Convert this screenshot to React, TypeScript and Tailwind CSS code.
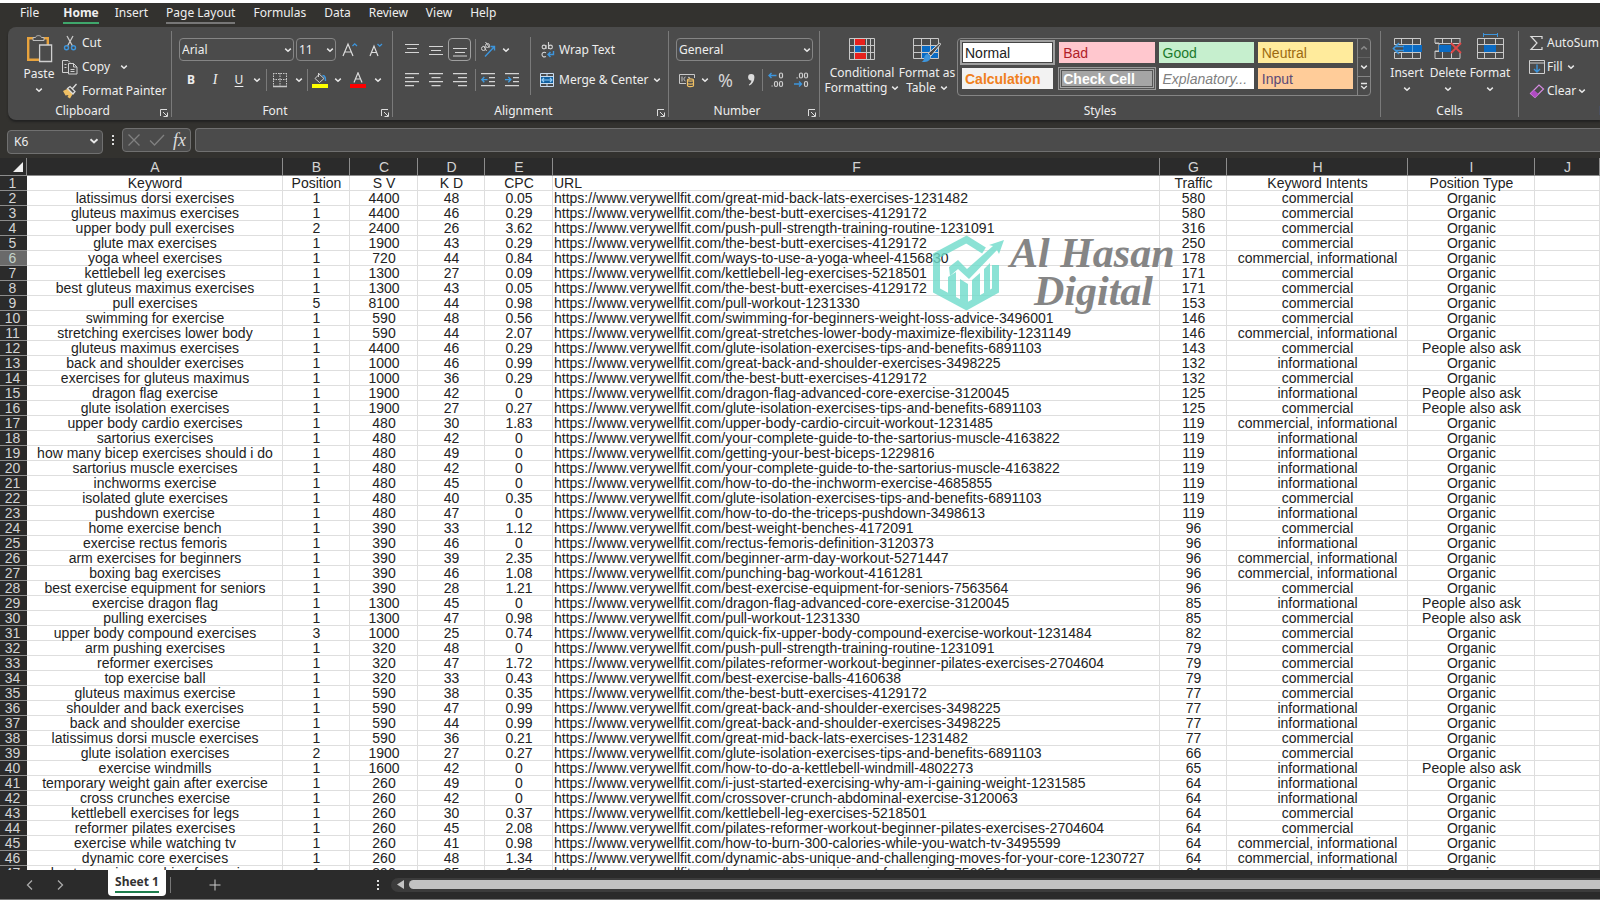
import React from "react";

type Row = [string, string, string, string, string, string, string, string, string];

const SITE = "https://www.verywellfit.com/";
const C = "commercial";
const N = "informational";
const B = "commercial, informational";
const O = "Organic";
const P = "People also ask";

const rows: Row[] = [
  ["latissimus dorsi exercises", "1", "4400", "48", "0.05", "great-mid-back-lats-exercises-1231482", "580", C, O],
  ["gluteus maximus exercises", "1", "4400", "46", "0.29", "the-best-butt-exercises-4129172", "580", C, O],
  ["upper body pull exercises", "2", "2400", "26", "3.62", "push-pull-strength-training-routine-1231091", "316", C, O],
  ["glute max exercises", "1", "1900", "43", "0.29", "the-best-butt-exercises-4129172", "250", C, O],
  ["yoga wheel exercises", "1", "720", "44", "0.84", "ways-to-use-a-yoga-wheel-4156830", "178", B, O],
  ["kettlebell leg exercises", "1", "1300", "27", "0.09", "kettlebell-leg-exercises-5218501", "171", C, O],
  ["best gluteus maximus exercises", "1", "1300", "43", "0.05", "the-best-butt-exercises-4129172", "171", C, O],
  ["pull exercises", "5", "8100", "44", "0.98", "pull-workout-1231330", "153", C, O],
  ["swimming for exercise", "1", "590", "48", "0.56", "swimming-for-beginners-weight-loss-advice-3496001", "146", C, O],
  ["stretching exercises lower body", "1", "590", "44", "2.07", "great-stretches-lower-body-maximize-flexibility-1231149", "146", B, O],
  ["gluteus maximus exercises", "1", "4400", "46", "0.29", "glute-isolation-exercises-tips-and-benefits-6891103", "143", C, P],
  ["back and shoulder exercises", "1", "1000", "46", "0.99", "great-back-and-shoulder-exercises-3498225", "132", N, O],
  ["exercises for gluteus maximus", "1", "1000", "36", "0.29", "the-best-butt-exercises-4129172", "132", C, O],
  ["dragon flag exercise", "1", "1900", "42", "0", "dragon-flag-advanced-core-exercise-3120045", "125", N, P],
  ["glute isolation exercises", "1", "1900", "27", "0.27", "glute-isolation-exercises-tips-and-benefits-6891103", "125", C, P],
  ["upper body cardio exercises", "1", "480", "30", "1.83", "upper-body-cardio-circuit-workout-1231485", "119", B, O],
  ["sartorius exercises", "1", "480", "42", "0", "your-complete-guide-to-the-sartorius-muscle-4163822", "119", N, O],
  ["how many bicep exercises should i do", "1", "480", "49", "0", "getting-your-best-biceps-1229816", "119", N, O],
  ["sartorius muscle exercises", "1", "480", "42", "0", "your-complete-guide-to-the-sartorius-muscle-4163822", "119", N, O],
  ["inchworms exercise", "1", "480", "45", "0", "how-to-do-the-inchworm-exercise-4685855", "119", N, O],
  ["isolated glute exercises", "1", "480", "40", "0.35", "glute-isolation-exercises-tips-and-benefits-6891103", "119", C, O],
  ["pushdown exercise", "1", "480", "47", "0", "how-to-do-the-triceps-pushdown-3498613", "119", N, O],
  ["home exercise bench", "1", "390", "33", "1.12", "best-weight-benches-4172091", "96", C, O],
  ["exercise rectus femoris", "1", "390", "46", "0", "rectus-femoris-definition-3120373", "96", N, O],
  ["arm exercises for beginners", "1", "390", "39", "2.35", "beginner-arm-day-workout-5271447", "96", B, O],
  ["boxing bag exercises", "1", "390", "46", "1.08", "punching-bag-workout-4161281", "96", B, O],
  ["best exercise equipment for seniors", "1", "390", "28", "1.21", "best-exercise-equipment-for-seniors-7563564", "96", C, O],
  ["exercise dragon flag", "1", "1300", "45", "0", "dragon-flag-advanced-core-exercise-3120045", "85", N, P],
  ["pulling exercises", "1", "1300", "47", "0.98", "pull-workout-1231330", "85", C, P],
  ["upper body compound exercises", "3", "1000", "25", "0.74", "quick-fix-upper-body-compound-exercise-workout-1231484", "82", C, O],
  ["arm pushing exercises", "1", "320", "48", "0", "push-pull-strength-training-routine-1231091", "79", C, O],
  ["reformer exercises", "1", "320", "47", "1.72", "pilates-reformer-workout-beginner-pilates-exercises-2704604", "79", C, O],
  ["top exercise ball", "1", "320", "33", "0.43", "best-exercise-balls-4160638", "79", C, O],
  ["gluteus maximus exercise", "1", "590", "38", "0.35", "the-best-butt-exercises-4129172", "77", C, O],
  ["shoulder and back exercises", "1", "590", "47", "0.99", "great-back-and-shoulder-exercises-3498225", "77", N, O],
  ["back and shoulder exercise", "1", "590", "44", "0.99", "great-back-and-shoulder-exercises-3498225", "77", N, O],
  ["latissimus dorsi muscle exercises", "1", "590", "36", "0.21", "great-mid-back-lats-exercises-1231482", "77", C, O],
  ["glute isolation exercises", "2", "1900", "27", "0.27", "glute-isolation-exercises-tips-and-benefits-6891103", "66", C, O],
  ["exercise windmills", "1", "1600", "42", "0", "how-to-do-a-kettlebell-windmill-4802273", "65", N, P],
  ["temporary weight gain after exercise", "1", "260", "49", "0", "i-just-started-exercising-why-am-i-gaining-weight-1231585", "64", N, O],
  ["cross crunches exercise", "1", "260", "42", "0", "crossover-crunch-abdominal-exercise-3120063", "64", N, O],
  ["kettlebell exercises for legs", "1", "260", "30", "0.37", "kettlebell-leg-exercises-5218501", "64", C, O],
  ["reformer pilates exercises", "1", "260", "45", "2.08", "pilates-reformer-workout-beginner-pilates-exercises-2704604", "64", C, O],
  ["exercise while watching tv", "1", "260", "41", "0.98", "how-to-burn-300-calories-while-you-watch-tv-3495599", "64", B, O],
  ["dynamic core exercises", "1", "260", "48", "1.34", "dynamic-abs-unique-and-challenging-moves-for-your-core-1230727", "64", B, O],
  ["best exercise machine for seniors", "1", "390", "35", "1.52", "best-exercise-equipment-for-seniors-7563564", "64", C, O],
];

const titles = ["Keyword", "Position", "S V", "K D", "CPC", "URL", "Traffic", "Keyword Intents", "Position Type"];

function Chevron({ className = "w-2 h-2" }: { className?: string }) {
  return (
    <svg viewBox="0 0 8 8" className={"shrink-0 " + className} fill="none" stroke="#e6e6e6" strokeWidth="1.5">
      <path d="M1.2 2.6 4 5.2 6.8 2.6" />
    </svg>
  );
}

function Launcher() {
  return (
    <button aria-label="More options" className="absolute right-[3px] bottom-0 h-2 w-2">
      <svg viewBox="0 0 8 8" className="h-2 w-2" fill="none" stroke="#dcdcdc">
        <path d="M.5 7V.5H7M3 3l4 4M7.5 3.500V7.500H3.500" />
      </svg>
    </button>
  );
}

function Group({ label, width, launcher, last, children }: { label: string; width: string; launcher?: boolean; last?: boolean; children: React.ReactNode }) {
  return (
    <section aria-label={label} className={"relative flex shrink-0 flex-col " + width + (last ? "" : " border-r border-[#7a7a7a]")}>
      <div className="flex h-[74px] shrink-0">{children}</div>
      <div className={"text-center leading-3" + (launcher ? " pr-3.5" : "")}>{label}</div>
      {launcher && <Launcher />}
    </section>
  );
}

function Picker({ label, value, options, width }: { label: string; value: string; options: string[]; width: string }) {
  return (
    <div className={"relative h-[23px] shrink-0 " + width}>
      <select aria-label={label} defaultValue={value} className="h-full w-full appearance-none rounded border border-[#858585] bg-[#4b4b4b] px-0.5 text-xs text-[#eee]">
        {options.map((o) => (
          <option key={o}>{o}</option>
        ))}
      </select>
      <Chevron className="pointer-events-none absolute top-2 right-0.5 h-2 w-2" />
    </div>
  );
}

function Tool({ label, width = "w-6", children }: { label: string; width?: string; children: React.ReactNode }) {
  return (
    <button aria-label={label} className={"flex h-[23px] shrink-0 items-center justify-center " + width}>
      {children}
    </button>
  );
}

const Divider = () => <span className="h-[22px] w-px shrink-0 bg-[#7a7a7a]" />;

function Lines({ d }: { d: string }) {
  return (
    <svg viewBox="0 0 14 14" className="h-[14px] w-[14px]" fill="none" stroke="#d4d4d4" strokeWidth="1.2">
      <path d={d} />
    </svg>
  );
}

function Indent({ out }: { out?: boolean }) {
  return (
    <svg viewBox="0 0 14 14" className="h-[14px] w-[14px]" fill="none" strokeWidth="1.2">
      <path stroke="#d4d4d4" d="M0 .6h14M8 4.600h6M8 8.600h6M0 12.600h14" />
      <path stroke="#3f9ade" strokeWidth="1.4" d={out ? "M6.500 6.600H1M3.300 4 .8 6.600l2.500 2.600" : "M0 6.600h5.500M3.300 4l2.500 2.600-2.500 2.600"} />
    </svg>
  );
}

function GridIcon({ kind }: { kind: "insert" | "delete" | "format" }) {
  return (
    <svg viewBox="0 0 30 28" className="h-7 w-[30px]" fill="none">
      {kind === "delete" ? (
        <path stroke="#c8c8c8" d="M2 5.500h25M2 5v5h4v8H2v7.500h25V20M27 5v5M9.500 5v5M18.500 5v5M9.500 18v7M18.500 18v7M2 10.500h25M2 18.500h18" />
      ) : (
        <path stroke="#c8c8c8" d="M2.500 5.500h26v20h-26zM2 11.500h26M2 19.500h26M9.500 5v20M20.500 5v20" />
      )}
      {kind === "insert" && (
        <>
          <path fill="#4b4b4b" d="M1 12h10v7H1z" />
          <path fill="#0a6bc4" d="M11 12h19v7H11z" />
          <path stroke="#3d95dc" strokeWidth="1.6" d="M12 13.500H3M12 17.500H3M7 10l-5.500 5.500L7 21" />
          <path stroke="#5aa7e2" d="M20.500 12v7" />
        </>
      )}
      {kind === "delete" && (
        <>
          <path fill="#0a6bc4" d="M6 12h12v7H6z" />
          <path stroke="#e04848" strokeWidth="1.8" d="m18 10 10 10M28 10 18 20" />
        </>
      )}
      {kind === "format" && (
        <>
          <path fill="#0a6bc4" d="M9 12h12v7H9z" />
          <path stroke="#3d95dc" d="M8 1.500h14M8.500 0v4M22.500 0v4" />
        </>
      )}
    </svg>
  );
}

function CellButton({ kind, label, width }: { kind: "insert" | "delete" | "format"; label: string; width: string }) {
  return (
    <button className={"flex flex-col items-center self-start pt-0.5 " + width}>
      <GridIcon kind={kind} />
      <span className="mt-1 leading-4">{label}</span>
      <Chevron className="mt-1 h-2 w-2" />
    </button>
  );
}

function Ribbon() {
  return (
    <div className="ml-2 flex h-[93px] overflow-hidden rounded-l-lg bg-[#4b4b4b] pt-1 pb-[3px] text-xs text-[#eee] shadow-[0_2px_2px_#222]">
      <Group label="Clipboard" width="w-[164px]" launcher>
        <button className="ml-3 flex w-[38px] flex-col items-center self-start pt-[3px]">
          <svg viewBox="0 0 28 30" className="h-[30px] w-7" fill="none">
            <path stroke="#e8a33d" strokeWidth="2.400" d="M8 4.200H3.200v21.600H15M18 4.200h4.800V11" />
            <path fill="#4b4b4b" stroke="#bdbdbd" d="M8 6.500V3.500h2.500C11 1 16 1 16.500 3.500H19v3z" />
            <path fill="#4b4b4b" stroke="#cfcfcf" strokeWidth="1.300" d="M14.600 11h12v16.500h-12z" />
          </svg>
          <span className="mt-0.5 leading-4">Paste</span>
          <Chevron className="mt-1 h-2 w-2" />
        </button>
        <div className="ml-1 flex flex-col">
          <button className="flex h-6 items-center gap-1">
            <svg viewBox="0 0 16 16" className="h-4 w-4" fill="none">
              <path stroke="#c8c8c8" strokeWidth="1.300" d="M5 1l5.500 10M11 1 5.500 11" />
              <circle cx="4.500" cy="12.800" r="2" stroke="#3d95dc" strokeWidth="1.400" />
              <circle cx="11.500" cy="12.800" r="2" stroke="#3d95dc" strokeWidth="1.400" />
            </svg>
            Cut
          </button>
          <button className="flex h-6 items-center gap-1">
            <svg viewBox="0 0 16 16" className="h-4 w-4" fill="none" stroke="#d0d0d0">
              <path d="M6 13.500H.5V1.500H6l2 2M6.500 4.500h5l3.500 3.500v7H6.500zM11.500 4.500V8H15M8.500 10.500h4M8.500 12.500h4M2.500 5.500h2M2.500 8.500h2" />
            </svg>
            Copy
            <Chevron className="ml-1.5 h-2 w-2" />
          </button>
          <button className="flex h-6 items-center gap-1 whitespace-nowrap">
            <svg viewBox="0 0 16 16" className="h-4 w-4" fill="none">
              <path fill="#f0c064" d="M1 8l5-2.500 5 5L8 15.500 5.500 14l1-2-3 .5z" />
              <path stroke="#dcdcdc" strokeWidth="1.300" d="M5.500 5.500 8 3.500l5 5-2 2.500zM10.500 5.500 14.500 1" />
            </svg>
            Format Painter
          </button>
        </div>
      </Group>

      <Group label="Font" width="w-[221px]" launcher>
        <div className="flex flex-col gap-[7px] pt-[7px] pl-[7px]">
          <div className="flex items-center gap-0.5">
            <Picker label="Font name" value="Arial" options={["Arial", "Calibri"]} width="w-[115px]" />
            <Picker label="Font size" value="11" options={["10", "11", "12"]} width="w-10" />
            <Tool label="Increase font size">
              <svg viewBox="0 0 16 16" className="h-4 w-4" fill="none">
                <path stroke="#dcdcdc" strokeWidth="1.200" d="M1 14 6 2l5 12M2.700 10h6.600" />
                <path stroke="#3d95dc" strokeWidth="1.300" d="m10.500 4 2.200-2.200L15 4" />
              </svg>
            </Tool>
            <Tool label="Decrease font size">
              <svg viewBox="0 0 16 16" className="h-4 w-4" fill="none">
                <path stroke="#dcdcdc" strokeWidth="1.200" d="M2 14 6 4l4 10M3.400 10.500h5.200" />
                <path stroke="#3d95dc" strokeWidth="1.300" d="m9.500 2 2.200 2.200L14 2" />
              </svg>
            </Tool>
          </div>
          <div className="flex items-center">
            <Tool label="Bold"><b>B</b></Tool>
            <Tool label="Italic"><i className="font-['Liberation_Serif',serif] text-sm">I</i></Tool>
            <Tool label="Underline"><span className="underline underline-offset-2">U</span></Tool>
            <Tool label="Underline styles" width="w-3"><Chevron /></Tool>
            <span className="w-[3px]" />
            <Divider />
            <Tool label="Borders" width="w-[26px]">
              <svg viewBox="0 0 16 16" className="h-4 w-4" fill="none" stroke="#c8c8c8">
                <path strokeDasharray="1.500 1" d="M1 1.500h14M1.500 1v13M14.500 1v13M8 1v13M1 7.500h14" />
                <path strokeWidth="1.400" d="M1 14.500h14" />
              </svg>
            </Tool>
            <Tool label="Border styles" width="w-3"><Chevron /></Tool>
            <span className="w-0.5" />
            <Divider />
            <Tool label="Fill color">
              <svg viewBox="0 0 16 16" className="h-4 w-4" fill="none">
                <path stroke="#d0d0d0" d="M6.500 1.500 12 6.500 7.500 10.500 3 6.500l5-5M6.500 1v4" />
                <path stroke="#3d95dc" strokeWidth="1.400" d="M10.500 3.500C13.500 3.500 13.500 6 13.500 9" />
                <path fill="#ffff00" d="M0 12h16v4H0z" />
              </svg>
            </Tool>
            <Tool label="Fill colors" width="w-3"><Chevron /></Tool>
            <Tool label="Font color" width="w-7">
              <svg viewBox="0 0 16 16" className="h-4 w-4" fill="none">
                <path stroke="#dcdcdc" strokeWidth="1.200" d="M4 10.500 8 .8l4 9.700M5.400 7h5.200" />
                <path fill="#f00" d="M0 12h16v4H0z" />
              </svg>
            </Tool>
            <Tool label="Font colors" width="w-3"><Chevron /></Tool>
          </div>
        </div>
      </Group>

      <Group label="Alignment" width="w-[276px]" launcher>
        <div className="flex shrink-0 flex-col gap-[7px] pt-[7px] pl-[7px]">
          <div className="flex items-center">
            <Tool label="Top align"><Lines d="M0 1.500h14M2 5.500h10M0 9.500h14" /></Tool>
            <Tool label="Middle align"><Lines d="M0 3.500h14M2 7.500h10M0 11.500h14" /></Tool>
            <button aria-label="Bottom align" className="flex h-[23px] w-[23px] items-center justify-center rounded border border-[#a0a0a0]">
              <Lines d="M0 5.500h14M2 9.500h10M0 13h14" />
            </button>
            <span className="w-1" />
            <Divider />
            <Tool label="Orientation">
              <svg viewBox="0 0 16 16" className="h-4 w-4" fill="none">
                <g stroke="#d0d0d0">
                  <circle cx="3.500" cy="6.500" r="2" />
                  <circle cx="7.500" cy="3.500" r="2" />
                  <path d="M3.500 3.800 6.500 9M5.500 0l4 5.500" />
                </g>
                <path stroke="#3d95dc" strokeWidth="1.400" d="M5 14.500 14.500 4.500M10.500 4.500h4v4" />
              </svg>
            </Tool>
            <Tool label="Orientation options" width="w-3"><Chevron /></Tool>
          </div>
          <div className="flex items-center">
            <Tool label="Align left"><Lines d="M0 .6h14M0 4.600h9M0 8.600h14M0 12.600h9" /></Tool>
            <Tool label="Center"><Lines d="M0 .6h14M2.500 4.600h9M0 8.600h14M2.500 12.600h9" /></Tool>
            <Tool label="Align right"><Lines d="M0 .6h14M5 4.600h9M0 8.600h14M5 12.600h9" /></Tool>
            <span className="w-[3px]" />
            <Divider />
            <Tool label="Decrease indent"><Indent out /></Tool>
            <Tool label="Increase indent"><Indent /></Tool>
          </div>
        </div>
        <span className="mt-1.5 ml-1.5 h-[58px] w-px shrink-0 bg-[#7a7a7a]" />
        <div className="flex flex-col gap-[7px] pt-[7px] pl-2">
          <button className="flex h-[23px] items-center gap-1 whitespace-nowrap">
            <svg viewBox="0 0 16 16" className="h-4 w-4" fill="none" strokeWidth="1.100">
              <g stroke="#d4d4d4">
                <circle cx="5" cy="5" r="1.900" />
                <path d="M7 3v4M9.500 0v7M7 14.500c-2 1-4 0-4-1.900s2-2.900 4-1.900" />
                <circle cx="11.500" cy="5" r="1.900" />
              </g>
              <path stroke="#3d95dc" strokeWidth="1.400" d="M14.500 9v3.500H9M11.500 10 9 12.500l2.500 2.500" />
            </svg>
            Wrap Text
          </button>
          <button className="flex h-[23px] items-center gap-1 whitespace-nowrap">
            <svg viewBox="0 0 16 16" className="h-4 w-4" fill="none">
              <path fill="#0f5f9f" d="M1 4h14v8H1z" />
              <path stroke="#c8dcf0" d="M1.500 1.500h13v13h-13zM1 4.500h14M1 11.500h14M8 1v3M8 12v3" />
              <path stroke="#8cc8f4" strokeWidth="1.200" d="M3 8h10M5 6 3 8l2 2M11 6l2 2-2 2" />
            </svg>
            Merge &amp; Center
            <Chevron className="h-2 w-2" />
          </button>
        </div>
      </Group>

      <Group label="Number" width="w-[151px]" launcher>
        <div className="flex flex-col gap-[7px] pt-[7px] pl-[7px]">
          <Picker label="Number format" value="General" options={["General", "Number"]} width="w-[137px]" />
          <div className="flex items-center">
            <Tool label="Accounting format" width="w-[22px]">
              <svg viewBox="0 0 16 16" className="h-4 w-4" fill="none">
                <path stroke="#c8c8c8" d="M7 11.500H.5v-9h15V6M3 4.500v5M6.500 5C4.500 5 4.500 9 6.500 9M9 5.500c2-1 2 1 1 1.500" />
                <path fill="#4b4b4b" stroke="#f0c064" strokeWidth="1.200" d="M8.500 8c0-1.500 6-1.500 6 0v5.500c0 1.500-6 1.500-6 0zM8.500 8c0 1.500 6 1.500 6 0M8.500 11c0 1.500 6 1.500 6 0" />
              </svg>
            </Tool>
            <Tool label="Accounting options" width="w-[14px]"><Chevron /></Tool>
            <Tool label="Percent" width="w-[27px]"><span className="text-lg leading-5 text-[#d4d4d4]">%</span></Tool>
            <Tool label="Comma style" width="w-[23px]">
              <svg viewBox="0 0 16 16" className="h-4 w-4">
                <path fill="#dcdcdc" d="M8.200 2a3.200 3.200 0 0 1 3.200 3.400c0 3.600-2 6.600-5 8.200l-.6-.9c1.600-1.200 2.500-2.700 2.600-4.300A3.200 3.200 0 1 1 8.200 2z" />
              </svg>
            </Tool>
            <Divider />
            <Tool label="Increase decimal" width="w-[25px]">
              <svg viewBox="0 0 16 16" className="h-4 w-4" fill="none" strokeWidth="1.200">
                <g stroke="#d0d0d0">
                  <rect x="11.500" y="1" width="3" height="5" rx="1.500" />
                  <rect x="6.500" y="9.500" width="3" height="5" rx="1.500" />
                  <rect x="11.500" y="9.500" width="3" height="5" rx="1.500" />
                  <path d="M3.500 14h1.200" />
                </g>
                <path stroke="#3d95dc" strokeWidth="1.400" d="M8.500 3.500H1M3.500 1 1 3.500 3.500 6" />
              </svg>
            </Tool>
            <Tool label="Decrease decimal" width="w-[25px]">
              <svg viewBox="0 0 16 16" className="h-4 w-4" fill="none" strokeWidth="1.200">
                <g stroke="#d0d0d0">
                  <rect x="6.500" y="1" width="3" height="5" rx="1.500" />
                  <rect x="11.500" y="1" width="3" height="5" rx="1.500" />
                  <rect x="11.500" y="9.500" width="3" height="5" rx="1.500" />
                  <path d="M3.500 5.800h1.200" />
                </g>
                <path stroke="#3d95dc" strokeWidth="1.400" d="M1 12h7.500M6 9.500 8.500 12 6 14.500" />
              </svg>
            </Tool>
          </div>
        </div>
      </Group>

      <Group label="Styles" width="w-[561px]">
        <button className="ml-1.5 flex w-[72px] flex-col items-center self-start pt-1 leading-[15px]">
          <svg viewBox="0 0 28 24" className="mt-0.5 mb-1 h-6 w-7" fill="none">
            <path fill="#e8201c" d="M6 1h11v7H6zM6 16h13v7H6z" />
            <path fill="#0a6bc4" d="M6 9h7v6H6z" />
            <path stroke="#c8c8c8" d="M1.500 1.500h25v21h-25zM1 8.500h26M1 15.500h26M6.500 1v21M18.500 1v21M22.500 1v21" />
          </svg>
          <span>Conditional</span>
          <span className="flex items-center gap-1">Formatting <Chevron /></span>
        </button>
        <button className="flex w-[58px] flex-col items-center self-start pt-1 leading-[15px]">
          <svg viewBox="0 0 30 26" className="mt-0.5 mb-0.5 h-[26px] w-[30px]" fill="none">
            <path fill="#0a6bc4" d="M10 8h17v14H10z" />
            <path stroke="#c8c8c8" d="M1.500 1.500h25v20h-25zM1 8.500h26M1 15.500h26M9.500 1v20M18.500 1v20" />
            <path fill="#4b4b4b" stroke="#dcdcdc" d="M28.500 7.500 19 19l-3-2.500L27 6.500c1-.6 2 .2 1.500 1z" />
            <path fill="#3d95dc" d="M15.500 17l3 3c0 4-4 5.500-9 5 3-1.500 2-3 3-5.500.6-1.500 1.600-2.300 3-2.500z" />
          </svg>
          <span className="whitespace-nowrap">Format as</span>
          <span className="flex items-center gap-1">Table <Chevron /></span>
        </button>
        <div className="mt-[7px] ml-px flex h-[58px] w-[414px] rounded border border-[#858585] font-['Liberation_Sans',Arial,sans-serif] text-sm">
          <div className="grid flex-1 grid-cols-4 content-start gap-x-1 gap-y-[3px] px-0.5 pt-px pr-1 text-left">
            <button className="h-[25px] border-2 border-[#a0a0a0] bg-white px-[3px] text-left leading-[18px] text-[#222] inset-ring inset-ring-[#444]">Normal</button>
            <button className="my-0.5 h-[21px] bg-[#ffc7ce] px-1 text-left text-[#b01e28]">Bad</button>
            <button className="my-0.5 h-[21px] bg-[#c6efce] px-1 text-left text-[#1c7a2c]">Good</button>
            <button className="my-0.5 h-[21px] bg-[#ffeb9c] px-1 text-left text-[#9c6a10]">Neutral</button>
            <button className="mx-0.5 h-[21px] bg-[#f2f2f2] px-[3px] text-left font-bold text-[#f08020]">Calculation</button>
            <button className="h-[21px] border-[3px] border-double border-[#555] bg-[#a5a5a5] px-px text-left leading-[14px] font-bold text-white outline outline-1 outline-[#999]">Check Cell</button>
            <button className="h-[21px] bg-white px-1 text-left text-[#7f7f7f] italic">Explanatory...</button>
            <button className="h-[21px] bg-[#ffcc99] px-1 text-left text-[#5c4a76]">Input</button>
          </div>
          <div className="flex w-[13px] flex-col divide-y divide-[#858585] border-l border-[#858585]">
            <button aria-label="Previous styles" className="flex flex-1 items-center justify-center opacity-40"><Chevron className="h-2 w-2 rotate-180" /></button>
            <button aria-label="Next styles" className="flex flex-1 items-center justify-center"><Chevron /></button>
            <button aria-label="All styles" className="flex flex-1 items-center justify-center">
              <svg viewBox="0 0 8 8" className="h-2 w-2" fill="none" stroke="#e6e6e6" strokeWidth="1.300"><path d="M1 1.500h6M1.200 4 4 6.700 6.800 4" /></svg>
            </button>
          </div>
        </div>
      </Group>

      <Group label="Cells" width="w-[138px]">
        <CellButton kind="insert" label="Insert" width="ml-[7px] w-[38px]" />
        <CellButton kind="delete" label="Delete" width="ml-px w-[42px]" />
        <CellButton kind="format" label="Format" width="w-[42px]" />
      </Group>

      <Group label="Editing" width="w-[200px]" last>
        <div className="flex flex-col pl-2.5">
          <button className="flex h-6 items-center gap-0.5">
            <svg viewBox="0 0 16 16" className="h-4 w-4" fill="none" stroke="#dcdcdc" strokeWidth="1.200"><path d="M13 4V1.500H2L8 8l-6 6.500h11V12" /></svg>
            AutoSum
          </button>
          <button className="flex h-6 items-center gap-0.5">
            <svg viewBox="0 0 16 16" className="h-4 w-4" fill="none">
              <path stroke="#d0d0d0" d="M.5 1.500h15v13H.5zM0 4h16" />
              <path stroke="#3d95dc" strokeWidth="1.400" d="M8 5.500V13M5 10l3 3 3-3" />
            </svg>
            Fill <Chevron className="ml-0.5 h-2 w-2" />
          </button>
          <button className="flex h-6 items-center gap-0.5">
            <svg viewBox="0 0 16 16" className="h-4 w-4" fill="none">
              <path stroke="#d58be0" strokeWidth="1.200" d="M1.500 10.500 10 2l4.500 4-8.500 8.500z" />
              <path fill="#b14bc4" d="M1.500 10.500 5 7l4.500 4L6 14.500z" />
            </svg>
            Clear <Chevron className="h-2 w-2" />
          </button>
        </div>
      </Group>
    </div>
  );
}

function FormulaBar() {
  return (
    <div className="flex h-6 items-stretch pl-[7px]">
      <div className="relative w-24">
        <input aria-label="Name box" defaultValue="K6" className="h-full w-full rounded border border-[#707070] bg-[#4b4b4b] px-1.5 text-xs text-[#eee]" />
        <Chevron className="pointer-events-none absolute top-2 right-1 h-[10px] w-[10px]" />
      </div>
      <div className="flex w-[19px] items-center justify-center">
        <svg viewBox="0 0 2 12" className="h-3 w-0.5" fill="#ddd"><path d="M0 1h2v2H0zM0 5h2v2H0zM0 9h2v2H0z" /></svg>
      </div>
      <div className="flex w-[69px] items-center justify-around rounded border border-[#707070] bg-[#4b4b4b]">
        <button aria-label="Cancel"><svg viewBox="0 0 14 14" className="h-[14px] w-[14px]" fill="none" stroke="#808080" strokeWidth="1.300"><path d="m1.500 1.500 11 11M12.500 1.500l-11 11" /></svg></button>
        <button aria-label="Enter"><svg viewBox="0 0 16 14" className="h-[14px] w-4" fill="none" stroke="#808080" strokeWidth="1.300"><path d="M1 7.500 5.500 12 15 2" /></svg></button>
        <button aria-label="Insert function" className="font-['Liberation_Serif',serif] text-lg leading-5 text-[#ddd] italic">fx</button>
      </div>
      <input aria-label="Formula" className="ml-1 min-w-0 flex-1 rounded-l border border-r-0 border-[#707070] bg-[#4b4b4b] px-2 text-xs text-white" />
    </div>
  );
}

function Watermark() {
  return (
    <div className="pointer-events-none absolute top-[76px] left-[932px] flex items-start">
      <svg viewBox="0 0 74 78" className="h-[78px] w-[74px] opacity-80" fill="none">
        <path stroke="#6fdccb" strokeWidth="7" d="M52 16.500 34.500 5.500 4.500 21.500v35L34.500 72.500l29-16V31" />
        <path fill="#6fdccb" d="M17 33l9-7 9 9 26-23-4-1 15-5-5 14-2-4-28 29-11-10-8 7z" />
        <path fill="#6fdccb" d="M16 43l8-5v27l-8-4zM28 45l8 5v20l-8-4zM40 46l8-7v24l-8 5zM52 35l6-6v27l-6 4z" />
      </svg>
      <div className="font-['Liberation_Serif',serif] text-[42px] leading-[38px] font-bold text-[#858585] italic">
        <div className="pl-1">Al Hasan</div>
        <div className="pl-7">Digital</div>
      </div>
    </div>
  );
}

function Sheet() {
  const letters = ["A", "B", "C", "D", "E", "F", "G", "H", "I", "J"];
  const cell = "h-[15px] border-r border-b border-[#dedede] p-0 leading-[14px] whitespace-nowrap";
  const head = "h-[15px] border-b border-[#8c8c8c] p-0 pr-0.5 text-center leading-[14px] font-normal";
  return (
    <main className="relative min-h-0 flex-1 overflow-hidden bg-white font-['Liberation_Sans',Arial,sans-serif] text-sm text-[#222]">
      <table className="w-full table-fixed border-separate border-spacing-0">
        <colgroup>
          <col className="w-[27px]" />
          <col className="w-64" />
          <col className="w-[67px]" />
          <col className="w-[68px]" />
          <col className="w-[67px]" />
          <col className="w-[68px]" />
          <col className="w-[607px]" />
          <col className="w-[67px]" />
          <col className="w-[181px]" />
          <col className="w-[127px]" />
          <col />
        </colgroup>
        <thead>
          <tr className="bg-[#2b2b2b] text-[#d4d4d4]">
            <th className="h-[18px] border-r border-b border-[#8c8c8c] p-0">
              <svg viewBox="0 0 10 10" className="ml-auto mr-[3px] h-[10px] w-[10px]" fill="#f0f0f0"><path d="M10 0v10H0z" /></svg>
            </th>
            {letters.map((l) => (
              <th key={l} scope="col" className="h-[18px] border-r border-b border-[#8c8c8c] p-0 pt-px pl-px leading-4 font-normal">{l}</th>
            ))}
          </tr>
        </thead>
        <tbody>
          <tr>
            <th scope="row" className={head + " bg-[#2b2b2b] text-[#d4d4d4]"}>1</th>
            {titles.map((t) => (
              <td key={t} className={cell + (t === "URL" ? " pl-px" : " pl-px text-center")}>{t}</td>
            ))}
            <td className={cell} />
          </tr>
          {rows.map((r, i) => (
            <tr key={i}>
              <th scope="row" className={head + (i === 4 ? " bg-[#6a6a6a] text-[#c4d4ca]" : " bg-[#2b2b2b] text-[#d4d4d4]")}>{i + 2}</th>
              {r.map((v, j) => (
                <td key={j} className={cell + (j === 5 ? " pl-px" : " pl-px text-center")}>{j === 5 ? SITE + v : v}</td>
              ))}
              <td className={cell} />
            </tr>
          ))}
        </tbody>
      </table>
      <Watermark />
    </main>
  );
}

function BottomBar() {
  return (
    <footer className="flex h-[30px] shrink-0 items-center border-b border-[#777] bg-[#2b2b2b]">
      <button aria-label="Previous sheet" className="ml-[26px] w-2">
        <svg viewBox="0 0 8 12" className="h-3 w-2" fill="none" stroke="#aaa" strokeWidth="1.300"><path d="M6 1.500 1.500 6 6 10.500" /></svg>
      </button>
      <button aria-label="Next sheet" className="ml-[22px] w-2">
        <svg viewBox="0 0 8 12" className="h-3 w-2" fill="none" stroke="#aaa" strokeWidth="1.300"><path d="M2 1.500 6.500 6 2 10.500" /></svg>
      </button>
      <button className="ml-11 flex h-[26px] w-[58px] items-center justify-center self-start rounded-b bg-white text-xs font-bold text-[#333]">
        <span className="border-b-2 border-[#1e7d4c] leading-[18px] whitespace-nowrap">Sheet 1</span>
      </button>
      <span className="ml-1 h-4 w-px bg-[#777]" />
      <button aria-label="Add sheet" className="ml-[38px]">
        <svg viewBox="0 0 12 12" className="h-3 w-3" stroke="#ccc"><path d="M6 .5v11M.5 6h11" /></svg>
      </button>
      <svg viewBox="0 0 2 12" className="ml-[156px] h-3 w-0.5" fill="#ddd"><path d="M0 1h2v2H0zM0 5h2v2H0zM0 9h2v2H0z" /></svg>
      <div className="ml-3 flex h-[14px] flex-1 items-center gap-[5px] rounded-l-full bg-[#3c3c3c] pl-1.5">
        <svg viewBox="0 0 7 9" className="h-[9px] w-[7px]" fill="#c4c4c4"><path d="M7 0v9L0 4.500z" /></svg>
        <div className="h-[9px] flex-1 rounded-l-full bg-[#c2c2c2]" />
      </div>
    </footer>
  );
}

export default function App() {
  const tabs = [
    ["File", "ml-5 border-transparent"],
    ["Home", "ml-6 border-[#3fa76c] font-bold"],
    ["Insert", "ml-4 border-transparent"],
    ["Page Layout", "ml-[18px] border-[#777]"],
    ["Formulas", "ml-[18px] border-transparent"],
    ["Data", "ml-[18px] border-transparent"],
    ["Review", "ml-[18px] border-transparent"],
    ["View", "ml-[18px] border-transparent"],
    ["Help", "ml-[18px] border-transparent"],
  ];
  return (
    <div className="flex h-screen flex-col overflow-hidden border-t-[3px] border-white bg-[#33322f] font-['Noto_Sans','Open_Sans',sans-serif]">
      <header className="shrink-0">
        <nav className="flex h-6 items-start text-xs text-[#eee]">
          {tabs.map(([t, c]) => (
            <button key={t} className={"h-[21px] border-b-2 leading-5 " + c}>{t}</button>
          ))}
        </nav>
        <Ribbon />
        <div className="pt-2 pb-1.5">
          <FormulaBar />
        </div>
      </header>
      <Sheet />
      <BottomBar />
    </div>
  );
}
